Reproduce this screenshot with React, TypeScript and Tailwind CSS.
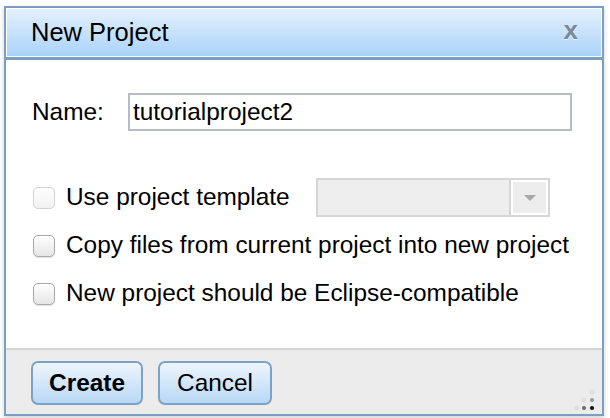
import React from 'react';

const font = { fontFamily: '"Liberation Sans", Arial, Helvetica, sans-serif' };

const Checkbox: React.FC<{ disabled?: boolean }> = ({ disabled }) => (
  <span
    className={
      'block w-[22px] h-[22px] shrink-0 rounded-[5px] border ' +
      (disabled
        ? 'border-[#d2d2d2] bg-gradient-to-b from-white to-[#f1f1f1]'
        : 'border-[#a9a9a9] bg-gradient-to-b from-white to-[#e6e6e6] shadow-[0_1px_1px_rgba(0,0,0,0.12)]')
    }
  />
);

const CheckRow: React.FC<{ label: string; disabled?: boolean; children?: React.ReactNode }> = ({
  label,
  disabled,
  children,
}) => (
  <div className="flex items-center h-[39px]">
    <div className="ml-[1px]">
      <Checkbox disabled={disabled} />
    </div>
    <span
      className={
        'ml-[11px] text-[24.4px] leading-none text-black whitespace-nowrap ' + (children ? 'w-[250px]' : '')
      }
    >
      {label}
    </span>
    {children}
  </div>
);

const ResizeGrip = () => (
  <svg width="22" height="22" viewBox="0 0 22 22" className="absolute right-[6px] bottom-[3px]">
    <circle cx="18" cy="3" r="2" fill="#e3e3e3" stroke="#cfcfcf" strokeWidth="0.6" />
    <circle cx="10" cy="11" r="2" fill="#e3e3e3" stroke="#cfcfcf" strokeWidth="0.6" />
    <circle cx="18" cy="11" r="2.1" fill="#9a9a9a" />
    <circle cx="2.5" cy="19" r="2" fill="#e3e3e3" stroke="#cfcfcf" strokeWidth="0.6" />
    <circle cx="10" cy="19" r="2.1" fill="#6e6e6e" />
    <circle cx="18" cy="19" r="2.1" fill="#111111" />
  </svg>
);

export default function App() {
  return (
    <div className="w-[610px] h-[418px] bg-white pt-[6px] pl-[4px]" style={font}>
      <div className="w-[600px] h-[410px] border-2 border-[#7a9fc3] flex flex-col bg-white shadow-[0_2px_5px_rgba(0,0,0,0.18)]">
        {/* Title bar */}
        <div className="h-[52px] shrink-0 border-b-[3px] border-[#7a9fc3]">
          <div className="h-[49px] border border-white bg-gradient-to-b from-[#e4f0fd] to-[#aad3fa] flex items-center justify-between pl-[24px] pr-[23px]">
            <span className="text-[25.5px] leading-none text-black">New Project</span>
            <span className="text-[26px] font-bold leading-none text-[#7b8999] -mt-[6px] [text-shadow:0_1px_0_rgba(255,255,255,0.7)]">
              x
            </span>
          </div>
        </div>

        {/* Body */}
        <div className="flex-1 pt-[33px] pl-[26px]">
          <div className="flex items-center h-[38px]">
            <span className="w-[96px] text-[24.4px] leading-none text-black">Name:</span>
            <div className="w-[444px] h-[38px] border-2 border-[#b5bbc7] flex items-center pl-[3px] text-[24.4px] leading-none text-black">
              tutorialproject2
            </div>
          </div>

          <div className="mt-[47px] flex flex-col gap-[9px]">
            <CheckRow label="Use project template" disabled>
              <div className="w-[234px] h-[39px] border-2 border-[#d6d6d6] bg-[#eeeeee] flex">
                <div className="flex-1" />
                <div className="w-[39px] border-l-2 border-[#d6d6d6]">
                  <div className="w-full h-full border-2 border-white bg-[#ededed] flex items-center justify-center">
                    <svg width="14" height="8" viewBox="0 0 14 8">
                      <path d="M1 1 L13 1 L7 7 Z" fill="#a9a9a9" />
                    </svg>
                  </div>
                </div>
              </div>
            </CheckRow>
            <CheckRow label="Copy files from current project into new project" />
            <CheckRow label="New project should be Eclipse-compatible" />
          </div>
        </div>

        {/* Footer */}
        <div className="h-[66px] shrink-0 border-t-2 border-[#d4d4d4] bg-[#ececec] relative flex items-start pt-[11px] pl-[25px] gap-[15px]">
          <button className="w-[112px] h-[44px] rounded-[7px] border-2 border-[#7ca2c7] bg-gradient-to-b from-[#eef5fd] to-[#b8d8f5] text-[24.4px] font-bold leading-none text-black">
            Create
          </button>
          <button className="w-[114px] h-[44px] rounded-[7px] border-2 border-[#7ca2c7] bg-gradient-to-b from-[#eef5fd] to-[#b8d8f5] text-[24.4px] leading-none text-black">
            Cancel
          </button>
          <ResizeGrip />
        </div>
      </div>
    </div>
  );
}
